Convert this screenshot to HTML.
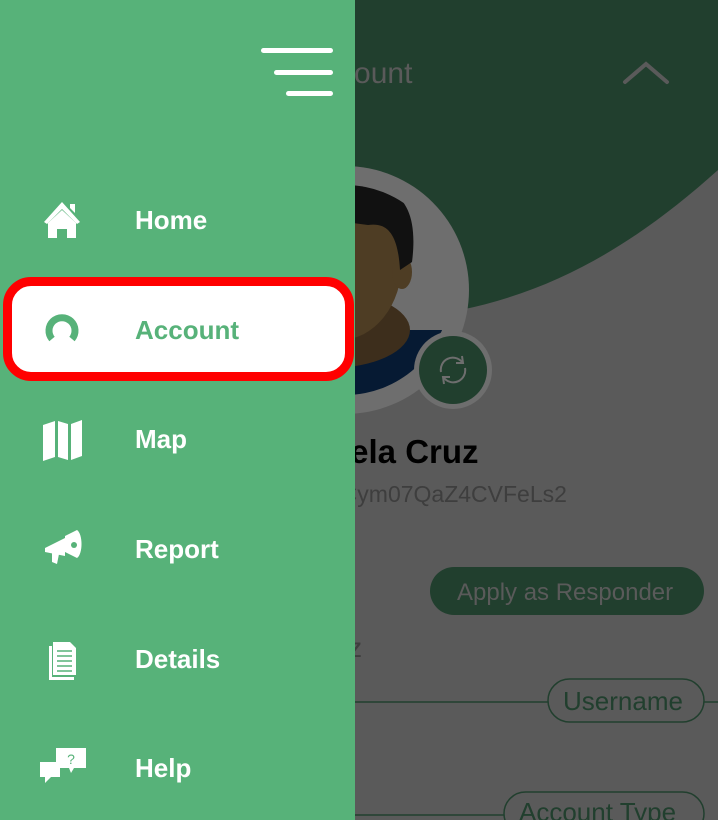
<!DOCTYPE html>
<html><head><meta charset="utf-8"><style>
*{margin:0;padding:0;box-sizing:border-box}
html,body{width:718px;height:820px;overflow:hidden}
body{position:relative;background:#5a5a5a;font-family:"Liberation Sans",Roboto,sans-serif}
.abs{position:absolute;white-space:nowrap}
.drawer{left:0;top:0;width:355px;height:820px;background:#57b279;z-index:5}
.item{position:absolute;left:135px;color:#fff;font-size:26px;font-weight:bold;line-height:30px}
.bar{position:absolute;height:5px;background:#fff;border-radius:3px}
.clip{position:absolute;left:355px;top:0;width:363px;height:820px;overflow:hidden}
</style></head><body>
<svg class="abs" style="left:0;top:0" width="718" height="820">
<path d="M0 0H718V170C640 240 560 290 460 310L355 320V0Z" fill="#213f2e"/>
<circle cx="345" cy="290" r="124" fill="#6e6e6e"/>
<clipPath id="c"><circle cx="345" cy="290" r="105"/></clipPath>
<g clip-path="url(#c)">
<rect x="200" y="330" width="260" height="80" fill="#061a33"/>
<ellipse cx="330" cy="330" rx="80" ry="38" fill="#3d2e1c"/>
<ellipse cx="340" cy="262" rx="62" ry="78" fill="#4e3d24"/>
<ellipse cx="402" cy="272" rx="10" ry="17" fill="#4e3d24"/>
<path d="M270 220C280 165 335 160 372 185C405 190 418 215 412 262L400 270C398 235 388 222 368 225C330 220 300 215 280 232Z" fill="#111"/>
</g>
<circle cx="453" cy="370" r="39" fill="#6e6e6e"/>
<circle cx="453" cy="370" r="34" fill="#213f2e"/>
<path d="M441 372a12 12 0 0 1 21-10M465 368a12 12 0 0 1-21 10" stroke="#6e6e6e" stroke-width="2" fill="none"/>
<path d="M462 356l1 7-7 0M444 384l-1-7 7 0" stroke="#6e6e6e" stroke-width="2" fill="none"/>
<path d="M625 82L646 64L667 82" stroke="#5a5a5a" stroke-width="4" fill="none" stroke-linecap="round"/>
<rect x="430" y="567" width="274" height="48" rx="24" fill="#213f2e"/>
<line x1="355" y1="702" x2="548" y2="702" stroke="#213f2e" stroke-width="1.5"/>
<line x1="704" y1="702" x2="718" y2="702" stroke="#213f2e" stroke-width="1.5"/>
<rect x="548" y="679" width="156" height="43" rx="21.5" fill="none" stroke="#213f2e" stroke-width="1.5"/>
<line x1="355" y1="815" x2="504" y2="815" stroke="#213f2e" stroke-width="1.5"/>
<rect x="504" y="792" width="200" height="43" rx="21.5" fill="none" stroke="#213f2e" stroke-width="1.5"/>
</svg>
<div class="clip">
<div class="abs" style="left:-51px;top:57px;font-size:30px;color:#5a5a5a">Account</div>
</div>
<div class="abs" style="left:286px;top:433px;font-size:33px;font-weight:bold;color:#000">Angela Cruz</div>
<div class="abs" style="left:310px;top:481px;font-size:23px;color:#3e3e3e">ABCym07QaZ4CVFeLs2</div>
<div class="abs" style="left:457px;top:579px;font-size:24px;color:#5a5a5a">Apply as Responder</div>
<div class="abs" style="left:303px;top:632px;font-size:28px;color:#3e3e3e">Cruz</div>
<div class="abs" style="left:563px;top:686px;font-size:26px;color:#213f2e">Username</div>
<div class="abs" style="left:519px;top:797px;font-size:26px;color:#213f2e">Account Type</div>

<div class="abs drawer">
<div class="bar" style="left:261px;top:48px;width:72px"></div>
<div class="bar" style="left:274px;top:70px;width:59px"></div>
<div class="bar" style="left:286px;top:91px;width:47px"></div>
<div class="abs" style="left:3px;top:277px;width:351px;height:104px;border:9px solid #ff0000;border-radius:28px;background:#fff"></div>
<svg class="abs" style="left:0;top:0" width="355" height="820">
<g fill="#fff">
<path d="M44 222L62 202L80 222L77 224L62 209L47 224Z"/>
<path d="M48 223L62 210L76 223V238H67V229H57V238H48Z" />
<path d="M70 204h5v9l-5-5z"/>
<path d="M43 425l12-4v36l-12 4zM58 421l10 3v36l-10-3zM71 424l11-4v36l-11 4z"/>
<path d="M45 548l20-10v18l-20-4z"/>
<path d="M65 536l12-6c6 4 6 24 0 28l-12-6z"/>
<circle cx="74" cy="545" r="3" fill="#57b279"/>
<path d="M52 553l7 1-2 10-5-2z"/>
<path d="M53 642h17l6 6v27H53z"/>
<path d="M49 646h3v31h22v3H49z"/>
<path d="M40 762h20v15h-9l-6 6v-6h-5z"/>
<path d="M56 748h30v20h-12l-3 5-2-5h-13z"/>
</g>
<g stroke="#57b279" stroke-width="1.5">
<path d="M57 651h15M57 656h15M57 661h15M57 666h15M57 671h15"/>
</g>
<text x="71" y="764" font-size="14" fill="#57b279" text-anchor="middle" font-family="Liberation Sans">?</text>
<path d="M52 339A13 13 0 1 1 72 339" stroke="#57b279" stroke-width="7" fill="none"/>
</svg>
<div class="item" style="top:205px">Home</div>
<div class="item" style="top:315px;color:#57b279">Account</div>
<div class="item" style="top:424px">Map</div>
<div class="item" style="top:534px">Report</div>
<div class="item" style="top:644px">Details</div>
<div class="item" style="top:753px">Help</div>
</div>
</body></html>
